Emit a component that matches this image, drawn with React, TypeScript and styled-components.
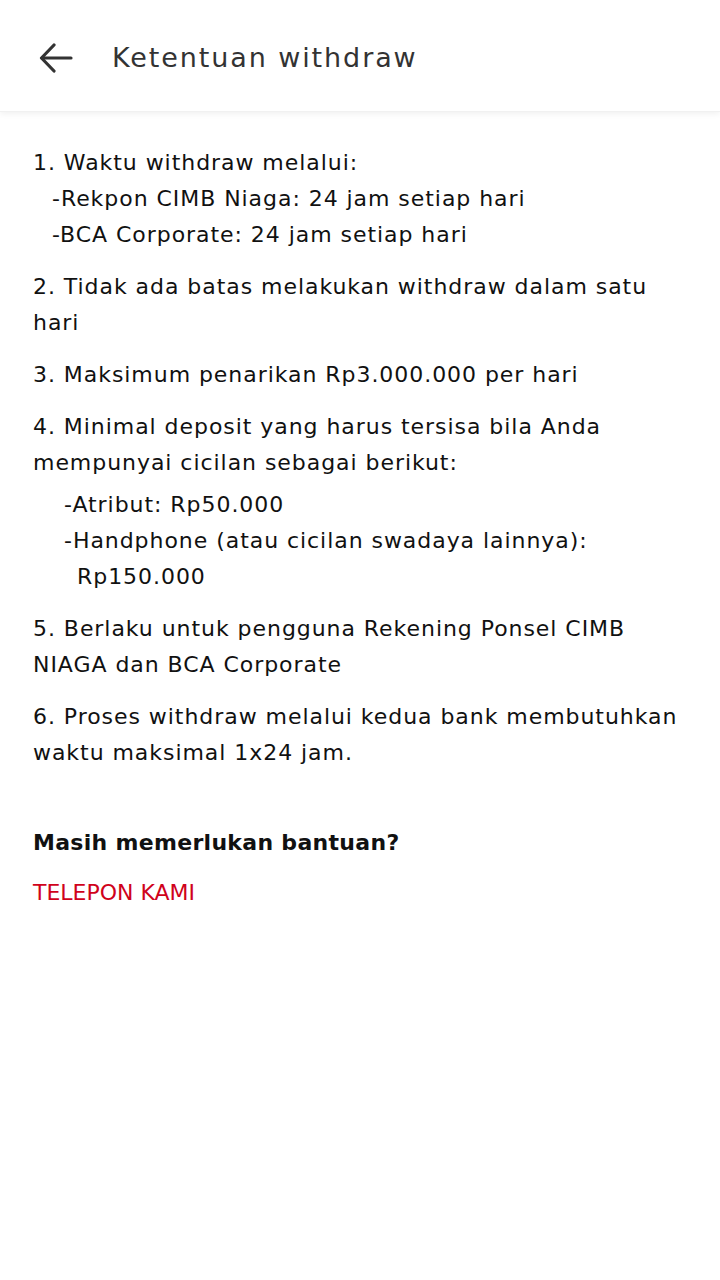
import React from "react";
import styled, { createGlobalStyle } from "styled-components";

const Global = createGlobalStyle`
  html, body { margin: 0; padding: 0; background: #ffffff; }
  body { font-family: "DejaVu Sans", "Noto Sans", sans-serif; }
`;

const Page = styled.div`
  width: 720px;
  min-height: 1280px;
  background: #fff;
`;

const Header = styled.header`
  height: 112px;
  display: flex;
  align-items: center;
  padding: 4px 0 0 38px;
  gap: 38px;
  box-shadow: 0 2px 6px rgba(0, 0, 0, 0.06);
  border-bottom: 1px solid #f1f1f1;
  box-sizing: border-box;
`;

const BackBtn = styled.button`
  border: none;
  background: none;
  padding: 0;
  width: 36px;
  height: 36px;
  display: flex;
  align-items: center;
  justify-content: center;
  color: #333;
`;

const Title = styled.h1`
  margin: 0;
  font-size: 27px;
  font-weight: 400;
  letter-spacing: 1.9px;
  color: #333;
`;

const Content = styled.main`
  padding: 33px 16px 0 33px;
  color: #111;
  font-size: 22px;
  line-height: 36px;
  letter-spacing: 0.95px;
`;

const Para = styled.div`
  margin: 0 0 16px 0;
`;

const Line = styled.div<{ $indent?: number }>`
  padding-left: ${(p) => p.$indent ?? 0}px;
  white-space: nowrap;
`;

const SubList = styled.div`
  margin-top: 6px;
`;

const Help = styled.h2`
  margin: 54px 0 0 0;
  font-size: 22px;
  line-height: 36px;
  font-weight: 700;
  letter-spacing: 0.3px;
  color: #111;
`;

const Phone = styled.a`
  display: block;
  margin-top: 14px;
  font-size: 22px;
  line-height: 36px;
  letter-spacing: 0;
  color: #d0021b;
  text-decoration: none;
`;

export default function App() {
  return (
    <Page>
      <Global />
      <Header>
        <BackBtn aria-label="back">
          <svg width="34" height="30" viewBox="0 0 34 30" fill="none" stroke="#333" strokeWidth="3.2" strokeLinecap="round" strokeLinejoin="round">
            <path d="M32 15H3" />
            <path d="M15 2L2.5 15L15 28" />
          </svg>
        </BackBtn>
        <Title>Ketentuan withdraw</Title>
      </Header>
      <Content>
        <Para>
          <Line>1. Waktu withdraw melalui:</Line>
          <Line $indent={19}>-Rekpon CIMB Niaga: 24 jam setiap hari</Line>
          <Line $indent={19}>-BCA Corporate: 24 jam setiap hari</Line>
        </Para>
        <Para>
          <Line>2. Tidak ada batas melakukan withdraw dalam satu</Line>
          <Line>hari</Line>
        </Para>
        <Para>
          <Line>3. Maksimum penarikan Rp3.000.000 per hari</Line>
        </Para>
        <Para>
          <Line>4. Minimal deposit yang harus tersisa bila Anda</Line>
          <Line>mempunyai cicilan sebagai berikut:</Line>
          <SubList>
            <Line $indent={31}>-Atribut: Rp50.000</Line>
            <Line $indent={31}>-Handphone (atau cicilan swadaya lainnya):</Line>
            <Line $indent={44}>Rp150.000</Line>
          </SubList>
        </Para>
        <Para>
          <Line>5. Berlaku untuk pengguna Rekening Ponsel CIMB</Line>
          <Line>NIAGA dan BCA Corporate</Line>
        </Para>
        <Para>
          <Line>6. Proses withdraw melalui kedua bank membutuhkan</Line>
          <Line>waktu maksimal 1x24 jam.</Line>
        </Para>
        <Help>Masih memerlukan bantuan?</Help>
        <Phone href="#">TELEPON KAMI</Phone>
      </Content>
    </Page>
  );
}
